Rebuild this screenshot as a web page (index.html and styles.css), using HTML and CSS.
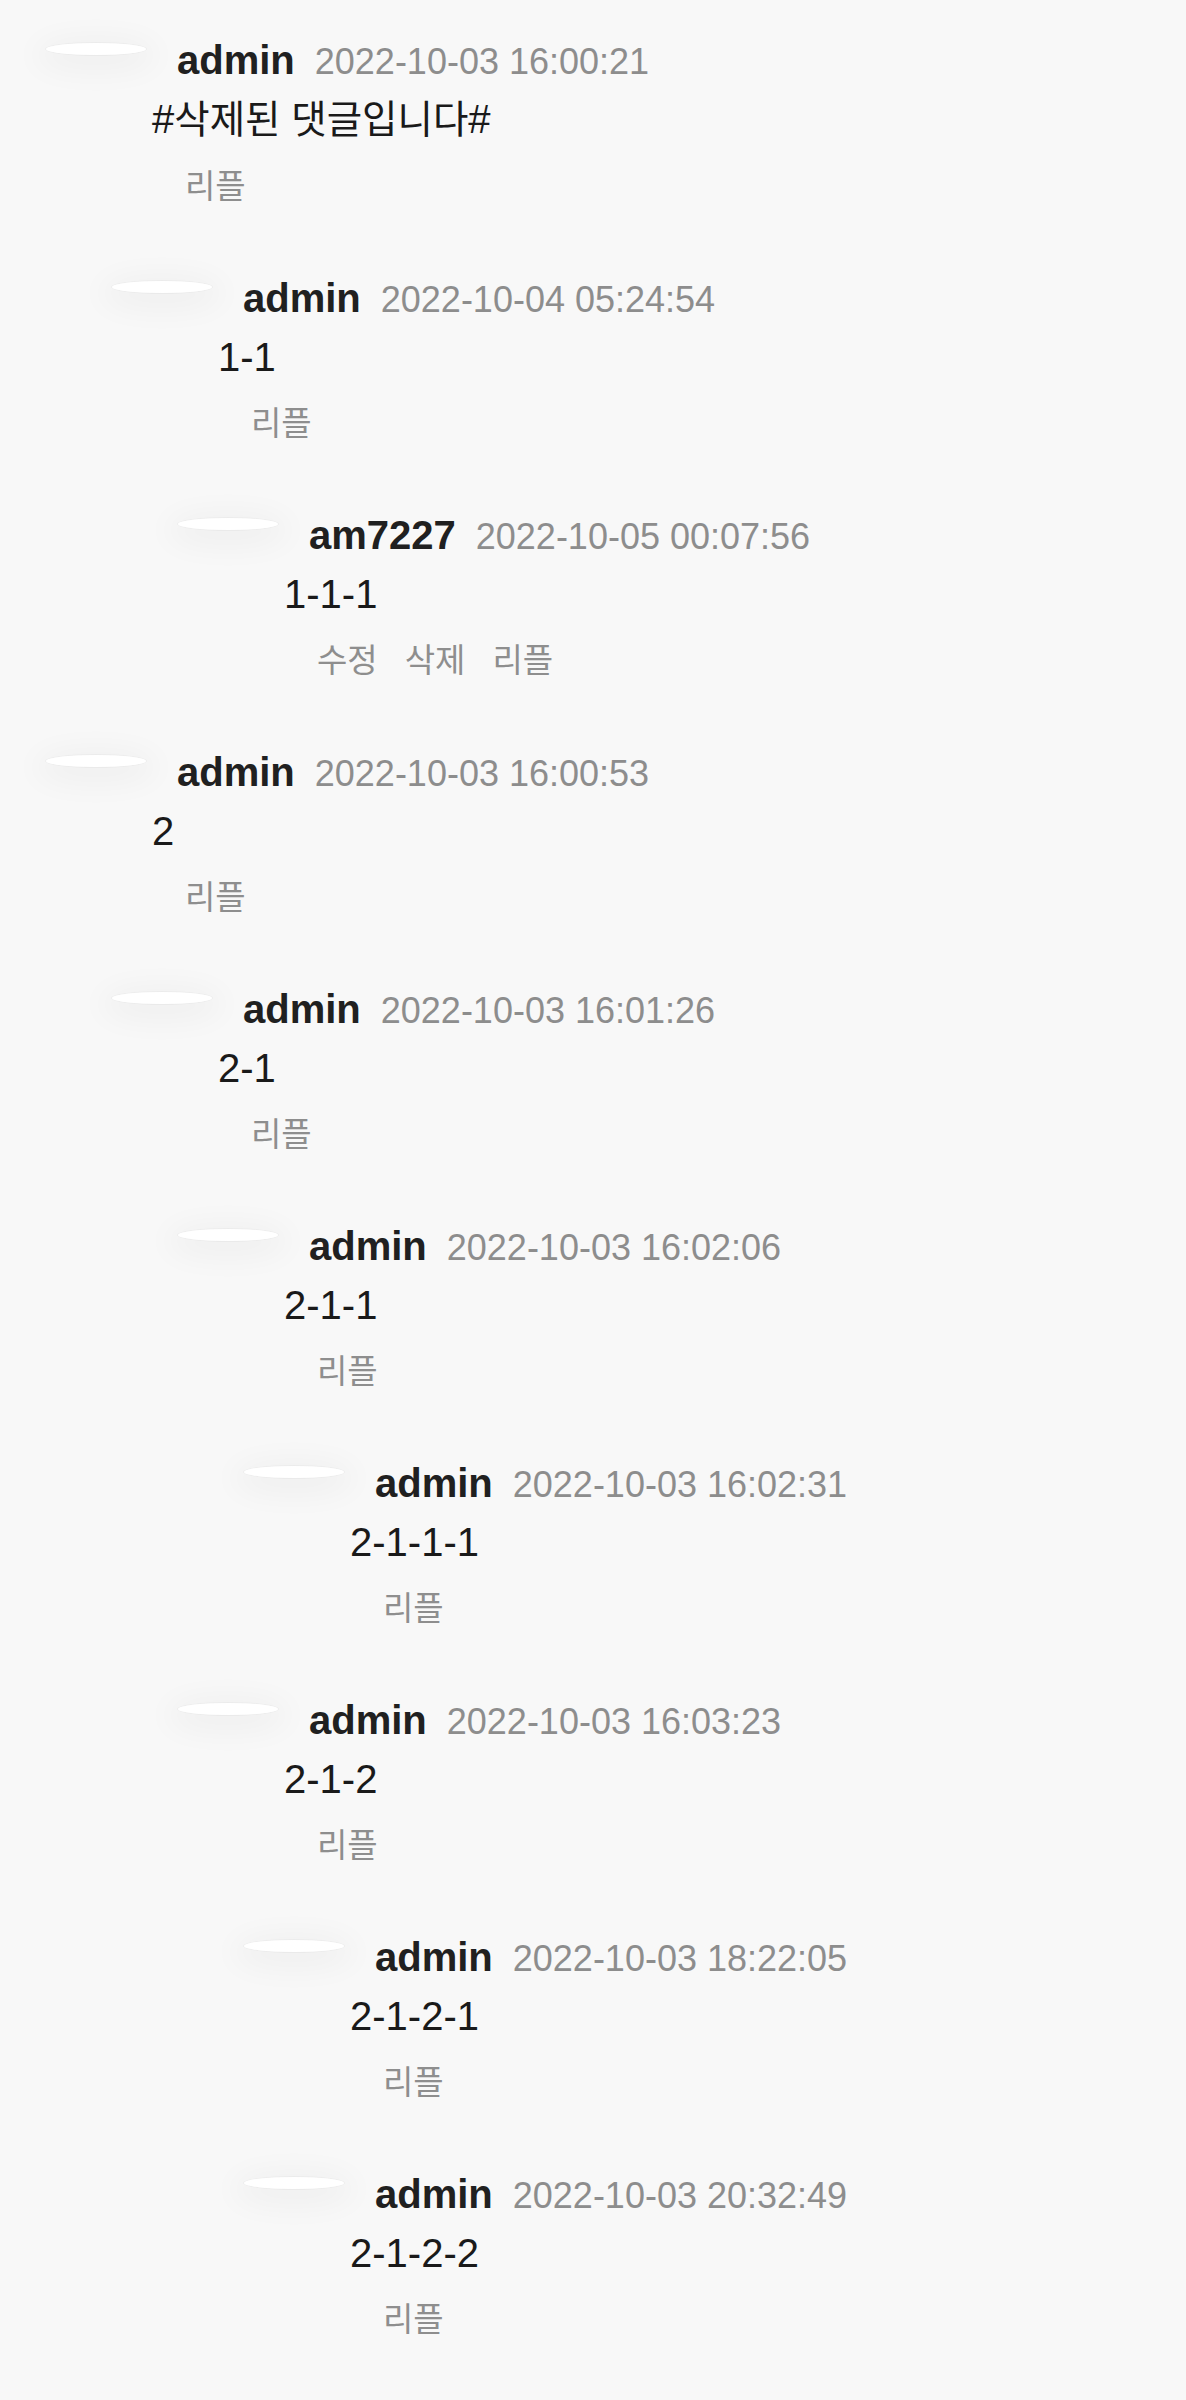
FILE: index.html
```html
<!DOCTYPE html>
<html lang="ko">
<head>
<meta charset="utf-8">
<title>댓글</title>
<link rel="stylesheet" href="styles.css">
</head>
<body>
<div class="comments">
  <div class="comment">
    <div class="head"><span class="avatar"></span><span class="name">admin</span><span class="date">2022-10-03 16:00:21</span></div>
    <div class="text">#<span class="ko">삭제된 댓글입니다</span>#</div>
    <div class="actions"><span class="act">리플</span></div>
  </div>
  <div class="replies">
    <div class="comment">
      <div class="head"><span class="avatar"></span><span class="name">admin</span><span class="date">2022-10-04 05:24:54</span></div>
      <div class="text">1-1</div>
      <div class="actions"><span class="act">리플</span></div>
    </div>
    <div class="replies">
      <div class="comment">
        <div class="head"><span class="avatar"></span><span class="name">am7227</span><span class="date">2022-10-05 00:07:56</span></div>
        <div class="text">1-1-1</div>
        <div class="actions"><span class="act">수정</span><span class="act">삭제</span><span class="act">리플</span></div>
      </div>
    </div>
  </div>

  <div class="comment">
    <div class="head"><span class="avatar"></span><span class="name">admin</span><span class="date">2022-10-03 16:00:53</span></div>
    <div class="text">2</div>
    <div class="actions"><span class="act">리플</span></div>
  </div>
  <div class="replies">
    <div class="comment">
      <div class="head"><span class="avatar"></span><span class="name">admin</span><span class="date">2022-10-03 16:01:26</span></div>
      <div class="text">2-1</div>
      <div class="actions"><span class="act">리플</span></div>
    </div>
    <div class="replies">
      <div class="comment">
        <div class="head"><span class="avatar"></span><span class="name">admin</span><span class="date">2022-10-03 16:02:06</span></div>
        <div class="text">2-1-1</div>
        <div class="actions"><span class="act">리플</span></div>
      </div>
      <div class="replies">
        <div class="comment">
          <div class="head"><span class="avatar"></span><span class="name">admin</span><span class="date">2022-10-03 16:02:31</span></div>
          <div class="text">2-1-1-1</div>
          <div class="actions"><span class="act">리플</span></div>
        </div>
      </div>
      <div class="comment">
        <div class="head"><span class="avatar"></span><span class="name">admin</span><span class="date">2022-10-03 16:03:23</span></div>
        <div class="text">2-1-2</div>
        <div class="actions"><span class="act">리플</span></div>
      </div>
      <div class="replies">
        <div class="comment">
          <div class="head"><span class="avatar"></span><span class="name">admin</span><span class="date">2022-10-03 18:22:05</span></div>
          <div class="text">2-1-2-1</div>
          <div class="actions"><span class="act">리플</span></div>
        </div>
        <div class="comment">
          <div class="head"><span class="avatar"></span><span class="name">admin</span><span class="date">2022-10-03 20:32:49</span></div>
          <div class="text">2-1-2-2</div>
          <div class="actions"><span class="act">리플</span></div>
        </div>
      </div>
    </div>
  </div>
</div>
</body>
</html>
```
FILE: styles.css
```css
html, body {
  margin: 0;
  padding: 0;
  background: #f8f8f8;
}
body {
  font-family: "Liberation Sans", "Noto Sans CJK KR", sans-serif;
  color: #1c1c1c;
}
.comments {
  padding: 36px 0 0 46px;
}
.replies {
  margin-left: 66px;
}
.comment {
  padding-bottom: 70px;
}
.head {
  display: flex;
  align-items: baseline;
  height: 48px;
  line-height: 48px;
}
.avatar {
  align-self: flex-start;
  flex: none;
  width: 100px;
  height: 12px;
  margin-top: 7px;
  margin-right: 31px;
  border-radius: 50%;
  background: linear-gradient(#ffffff 0, #ffffff 46%, #e9e9e9 46%, #e9e9e9 54%, #ffffff 54%);
  box-shadow: 0 0 0 1px rgba(0, 0, 0, 0.03), 0 6px 30px 12px rgba(0, 0, 0, 0.035);
}
.name {
  font-size: 40px;
  font-weight: bold;
  color: #202020;
}
.date {
  margin-left: 20px;
  font-size: 36px;
  color: #8d8d8d;
}
.text {
  margin-top: 11px;
  margin-left: 106px;
  font-size: 40px;
  line-height: 48px;
  color: #1a1a1a;
}
.ko {
  font-size: 38.5px;
}
.actions {
  display: flex;
  gap: 27px;
  margin-top: 20px;
  margin-left: 139px;
  font-family: "Noto Sans CJK KR", "Liberation Sans", sans-serif;
  font-size: 33px;
  line-height: 40px;
  color: #8e8e8e;
}
```
